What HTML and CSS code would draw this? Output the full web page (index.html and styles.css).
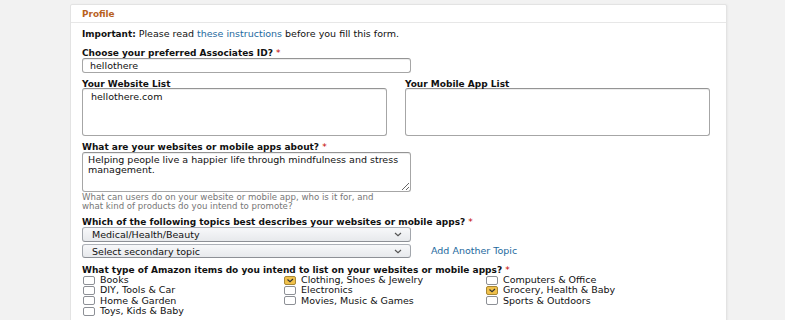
FILE: index.html
```html
<!DOCTYPE html>
<html>
<head>
<meta charset="utf-8">
<link rel="stylesheet" href="styles.css">
</head>
<body>
<div class="card">
  <div class="card-header">Profile</div>
  <div class="card-body">
    <p class="note"><b>Important:</b> Please read <a class="link" href="#">these instructions</a> before you fill this form.</p>

    <div class="label label-first">Choose your preferred Associates ID? <span class="req">*</span></div>
    <div class="input">hellothere</div>

    <div class="two-col">
      <div class="col">
        <div class="label">Your Website List</div>
        <div class="box box-list">hellothere.com</div>
      </div>
      <div class="col">
        <div class="label">Your Mobile App List</div>
        <div class="box box-list"></div>
      </div>
    </div>

    <div class="label">What are your websites or mobile apps about? <span class="req">*</span></div>
    <textarea class="box box-about">Helping people live a happier life through mindfulness and stress management.</textarea>
    <div class="help">What can users do on your website or mobile app, who is it for, and<br>what kind of products do you intend to promote?</div>

    <div class="label label-topics">Which of the following topics best describes your websites or mobile apps? <span class="req">*</span></div>
    <div class="select">Medical/Health/Beauty<svg class="chev" width="8" height="5" viewBox="0 0 8 5"><polyline points="1,1 4,3.6 7,1" fill="none" stroke="#555" stroke-width="1.2"/></svg></div>
    <div class="topic-row">
      <div class="select select-2">Select secondary topic<svg class="chev" width="8" height="5" viewBox="0 0 8 5"><polyline points="1,1 4,3.6 7,1" fill="none" stroke="#555" stroke-width="1.2"/></svg></div>
      <a class="link add-topic" href="#">Add Another Topic</a>
    </div>

    <div class="label label-types">What type of Amazon items do you intend to list on your websites or mobile apps? <span class="req">*</span></div>
    <div class="checks">
      <div class="check"><span class="cb"></span>Books</div>
      <div class="check"><span class="cb cb-on"><svg width="10" height="7" viewBox="0 0 10 7"><polyline points="2.5,2.5 5,4.6 8,2" fill="none" stroke="#333" stroke-width="1.2"/></svg></span>Clothing, Shoes &amp; Jewelry</div>
      <div class="check"><span class="cb"></span>Computers &amp; Office</div>
      <div class="check"><span class="cb"></span>DIY, Tools &amp; Car</div>
      <div class="check"><span class="cb"></span>Electronics</div>
      <div class="check"><span class="cb cb-on"><svg width="10" height="7" viewBox="0 0 10 7"><polyline points="2.5,2.5 5,4.6 8,2" fill="none" stroke="#333" stroke-width="1.2"/></svg></span>Grocery, Health &amp; Baby</div>
      <div class="check"><span class="cb"></span>Home &amp; Garden</div>
      <div class="check"><span class="cb"></span>Movies, Music &amp; Games</div>
      <div class="check"><span class="cb"></span>Sports &amp; Outdoors</div>
      <div class="check"><span class="cb"></span>Toys, Kids &amp; Baby</div>
    </div>
  </div>
</div>
</body>
</html>
```

FILE: styles.css
```css
* { box-sizing: border-box; }
html, body { margin: 0; padding: 0; }
body {
  background: #f2f2f2;
  font-family: "DejaVu Sans", "Noto Sans", sans-serif;
  font-size: 9.5px;
  line-height: 10px;
  color: #111;
}
.card {
  margin: 4px 0 0 70px;
  width: 657px;
  height: 330px;
  background: #fff;
  border: 1px solid #e3e3e3;
  border-radius: 2px;
  box-shadow: 1px 0 2px rgba(0,0,0,.04);
}
.card-header {
  height: 18px;
  line-height: 18px;
  padding-left: 11px;
  border-bottom: 1px solid #e7e7e7;
  color: #b8621f;
  font-weight: bold;
  font-size: 8.9px;
}
.card-body { padding: 6px 0 0 11px; }
.note { margin: 0; }
.note b { font-weight: bold; font-size: 8.9px; }
.link { color: #1e6a9e; text-decoration: none; }
.label { font-weight: bold; font-size: 9px; margin-top: 6px; margin-bottom: -1px; }
.label-first { margin-top: 9px; }
.req { color: #c40000; font-weight: normal; }
.input {
  width: 329px;
  height: 15px;
  margin-top: 1px;
  border: 1px solid #a6a6a6;
  border-top-color: #949494;
  border-radius: 3px;
  padding: 2px 7px;
  line-height: 10px;
  box-shadow: 0 1px 0 rgba(0,0,0,.07) inset;
}
.two-col { display: flex; gap: 18px; }
.col { width: 305px; }
.box {
  display: block;
  border: 1px solid #a6a6a6;
  border-top-color: #949494;
  border-radius: 3px;
  background: #fff;
  box-shadow: 0 1px 0 rgba(0,0,0,.07) inset;
}
.box-list { height: 48px; padding: 3px 8px; }
.box-about {
  width: 329px;
  height: 40px;
  margin: 1px 0 0;
  padding: 2px 5px;
  font: inherit;
  line-height: 10px;
  color: #111;
  resize: vertical;
  outline: none;
}
.help { color: #767676; font-size: 8.6px; line-height: 9px; margin-top: 1px; }
.label-topics { margin-top: 6px; margin-bottom: 0; }
.select {
  position: relative;
  width: 329px;
  height: 15px;
  padding: 2px 9px;
  border: 1px solid #adb1b8;
  border-color: #adb1b8 #a2a6ac #8d9096;
  border-radius: 3px;
  background: linear-gradient(to bottom, #f7f8fa, #e7e9ec);
  line-height: 10px;
}
.chev {
  position: absolute;
  right: 8px;
  top: 4px;
}
.topic-row { display: flex; align-items: center; gap: 20px; margin-top: 2px; }
.select-2 { height: 14px; line-height: 9px; }
.add-topic { line-height: 10px; }
.label-types { margin-top: 7px; margin-bottom: 0; }
.checks {
  display: grid;
  grid-template-columns: 201px 202px auto;
  grid-auto-rows: 10.3px;
  padding-left: 1px;
}
.check { display: flex; align-items: center; white-space: nowrap; }
.cb {
  display: inline-flex;
  align-items: center;
  justify-content: center;
  width: 12px;
  height: 9px;
  margin-right: 5px;
  border: 1px solid #8d9096;
  border-radius: 2px;
  background: #fff;
  flex: none;
}
.cb-on {
  background: #f0c14b;
  border-color: #a88734;
}
.cb svg { display: block; }
```
